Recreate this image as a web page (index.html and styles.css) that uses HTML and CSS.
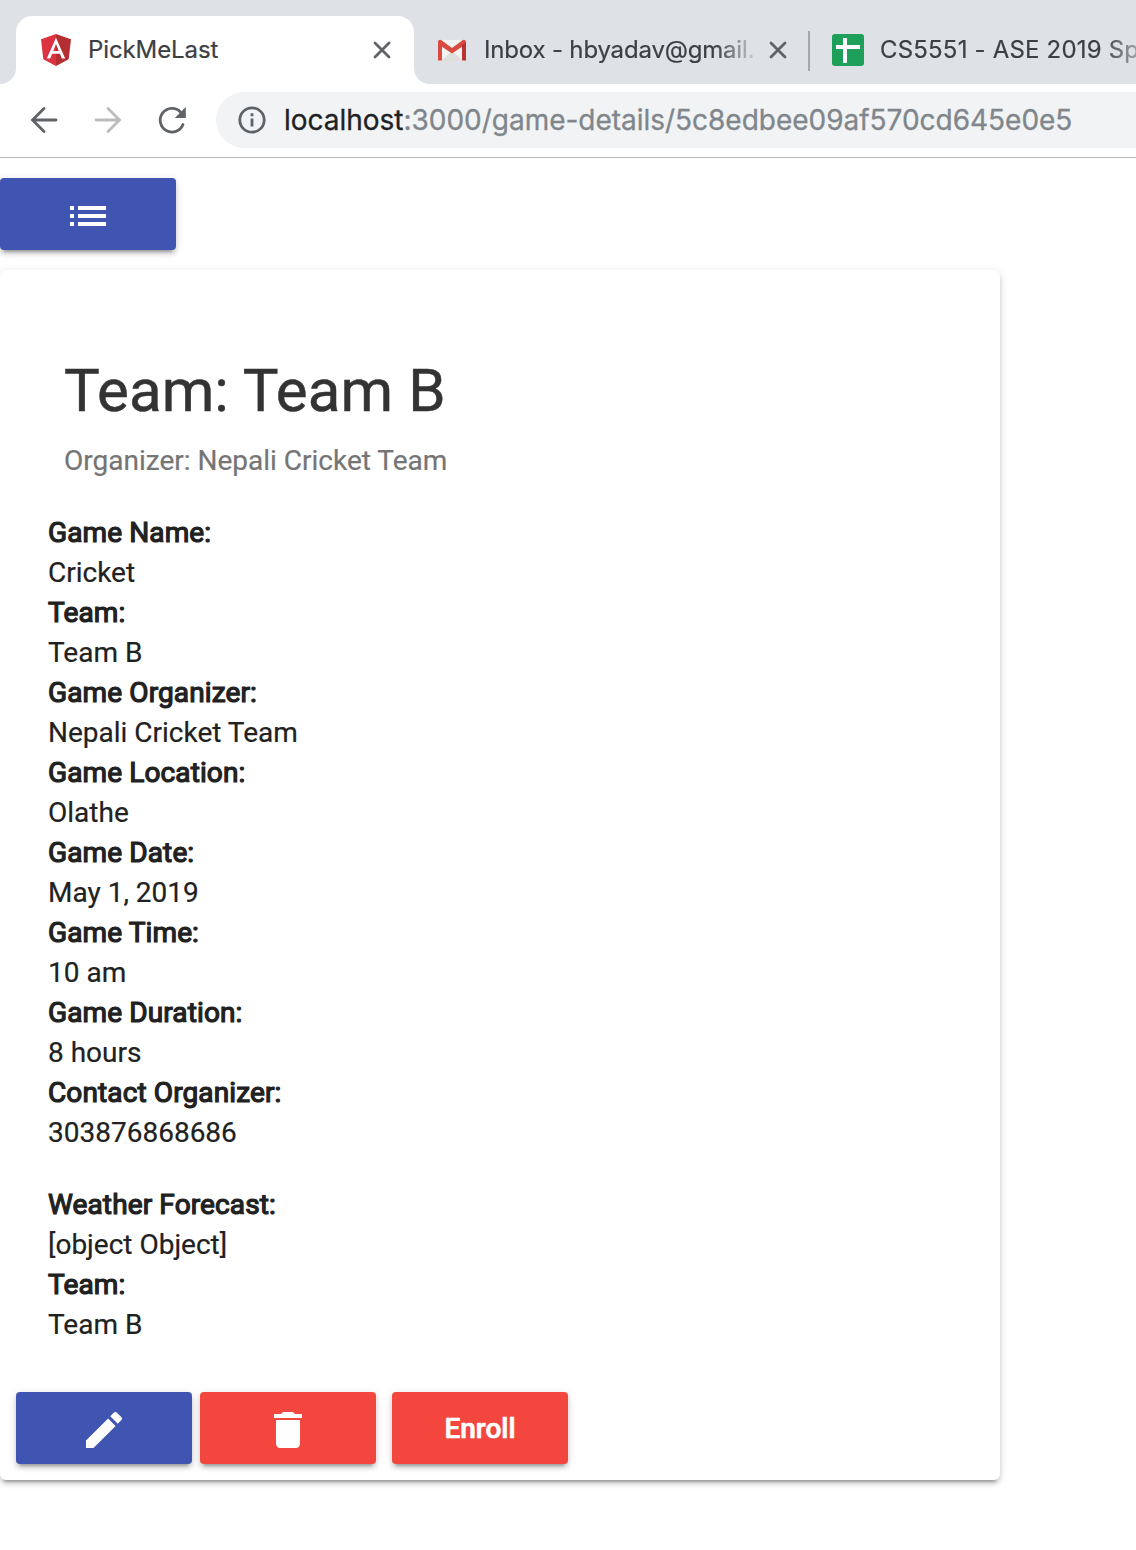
FILE: index.html
```html
<!DOCTYPE html>
<html lang="en">
<head>
<meta charset="utf-8">
<title>PickMeLast</title>
<link rel="stylesheet" href="styles.css">
</head>
<body>
<header class="browser">
  <div class="tabs">
    <div class="tab tab-active">
      <svg class="favicon" viewBox="0 0 32 32"><path fill="#dd3340" d="M16 0 1 5.3l2.3 20L16 32z"/><path fill="#b52e31" d="M16 0l15 5.3-2.3 20L16 32z"/><path fill="#fff" fill-rule="evenodd" d="M16 3.7 6.8 24.500h3.400l1.850-4.700h7.900l1.850 4.700h3.400zM16 10.100l2.750 6.900h-5.500z"/></svg>
      <span class="tab-title title-app">PickMeLast</span>
      <svg class="close" viewBox="0 0 20 20"><path d="M3 3 17 17M17 3 3 17"/></svg>
    </div>
    <div class="tab tab-mail">
      <svg class="favicon" viewBox="0 0 32 32"><path fill="#f2f2f2" d="M4 6h24v21H4z"/><path fill="#dedede" d="m5 27 11-10 11 10z"/><path fill="#d0d0d0" d="M6 12l10 7 10-7v-1l-10 6-10-6z"/><path fill="#d94a40" d="M2 8c0-2 2-3 3.500-1.800L16 14l10.500-7.800C28 5 30 6 30 8v2L16 19.500 2 10z"/><path fill="#d94a40" d="M2 8v18.500h4V11z"/><path fill="#b93430" d="M30 8v18.500h-4V11z"/></svg>
      <span class="tab-title title-mail">Inbox - hbyadav@gmail.</span>
      <svg class="close" viewBox="0 0 20 20"><path d="M3 3 17 17M17 3 3 17"/></svg>
    </div>
    <div class="tab tab-sheet">
      <svg class="favicon" viewBox="0 0 32 32"><rect width="32" height="32" rx="3" fill="#1fa05a"/><path fill="#fff" d="M11 4h4v7h13v4H15v14h-4V15H4v-4h7z"/></svg>
      <span class="tab-title title-sheet">CS5551 - ASE 2019 Sp</span>
    </div>
  </div>
  <div class="toolbar">
    <svg class="nav" viewBox="0 0 32 32"><path d="M28 16H5M16 4.500 4.500 16 16 27.500"/></svg>
    <svg class="nav nav-off" viewBox="0 0 32 32"><path d="M4 16h23M16 4.500 27.500 16 16 27.500"/></svg>
    <svg class="nav" viewBox="0 0 32 32"><path d="M27 20.500A11.800 11.800 0 1 1 24.500 8"/><path class="nav-head" d="M29.800 3v11H18.800z"/></svg>
    <div class="address">
      <svg class="info" viewBox="0 0 28 28"><circle cx="14" cy="14" r="12.200"/><path d="M14 12.500v8M14 7.200v3"/></svg>
      <span class="url"><span class="host">localhost</span>:3000/game-details/5c8edbee09af570cd645e0e5</span>
    </div>
  </div>
</header>
<main class="page">
  <button class="btn btn-primary" aria-label="All games"><svg class="icon" viewBox="0 0 24 24"><path d="M3 13h2v-2H3v2zm0 4h2v-2H3v2zm0-8h2V7H3v2zm4 4h14v-2H7v2zm0 4h14v-2H7v2zM7 7v2h14V7H7z"/></svg></button>
  <article class="card">
    <h2 class="title">Team: Team B</h2>
    <p class="subtitle">Organizer: Nepali Cricket Team</p>
    <dl class="details">
      <dt>Game Name:</dt><dd>Cricket</dd>
      <dt>Team:</dt><dd>Team B</dd>
      <dt>Game Organizer:</dt><dd>Nepali Cricket Team</dd>
      <dt>Game Location:</dt><dd>Olathe</dd>
      <dt>Game Date:</dt><dd>May 1, 2019</dd>
      <dt>Game Time:</dt><dd>10 am</dd>
      <dt>Game Duration:</dt><dd>8 hours</dd>
      <dt>Contact Organizer:</dt><dd>303876868686</dd>
    </dl>
    <dl class="details">
      <dt>Weather Forecast:</dt><dd>[object Object]</dd>
      <dt>Team:</dt><dd>Team B</dd>
    </dl>
    <div class="actions">
      <button class="btn btn-primary" aria-label="Edit"><svg class="icon" viewBox="0 0 24 24"><path d="M3 17.250V21h3.750L17.810 9.940l-3.750-3.750L3 17.250zM20.710 7.040c.39-.39.39-1.020 0-1.410l-2.340-2.340c-.39-.39-1.020-.39-1.410 0l-1.830 1.830 3.750 3.750 1.830-1.830z"/></svg></button>
      <button class="btn btn-warn" aria-label="Delete"><svg class="icon" viewBox="0 0 24 24"><path d="M6 19c0 1.100.9 2 2 2h8c1.100 0 2-.9 2-2V7H6v12zM19 4h-3.500l-1-1h-5l-1 1H5v2h14V4z"/></svg></button>
      <button class="btn btn-warn btn-enroll">Enroll</button>
    </div>
  </article>
</main>
</body>
</html>
```
FILE: styles.css
```css
* { box-sizing: border-box; }
body { margin: 0; min-height: 1550px; background: #fff; font-family: Roboto, sans-serif; color: #212121; }
svg { display: block; flex: none; }

.browser { font-family: Inter, "Liberation Sans", sans-serif; border-bottom: 1px solid #b3b4b6; }
.tabs { display: flex; height: 84px; padding: 16px 0 0 16px; background: #dee1e6; overflow: hidden; }
.tab { position: relative; display: flex; align-items: center; height: 68px; flex: none; }
.tab-active { width: 398px; padding: 0 22px 0 24px; background: #fff; border-radius: 16px 16px 0 0; }
.tab-active::before, .tab-active::after { content: ""; position: absolute; bottom: 0; width: 16px; height: 16px; }
.tab-active::before { left: -16px; background: radial-gradient(circle at 0 0, transparent 15.5px, #fff 16.500px); }
.tab-active::after { right: -16px; background: radial-gradient(circle at 100% 0, transparent 15.5px, #fff 16.500px); }
.tab-mail { width: 396px; padding: 0 22px; }
.tab-mail::after { content: ""; position: absolute; right: 0; top: 15px; width: 2px; height: 40px; background: #a4a7ab; }
.tab-sheet { padding-left: 22px; }
.favicon { width: 32px; height: 32px; margin-right: 16px; }
.tab-title { font-size: 24px; line-height: 32px; color: #3c4043; white-space: nowrap; flex: none; -webkit-text-stroke: 0.2px currentColor; }
.title-app { letter-spacing: -0.1px; }
.title-mail { width: 270px; letter-spacing: -0.18px; mask-image: linear-gradient(to right, #000 232px, transparent 276px); }
.title-sheet { width: 256px; letter-spacing: 0.19px; mask-image: linear-gradient(to right, #000 222px, transparent 280px); }
.close { width: 20px; height: 20px; margin-left: auto; fill: none; stroke: #5f6368; stroke-width: 2.8; stroke-linecap: round; }
.tab-mail .close { margin-left: 14px; }

.toolbar { display: flex; align-items: center; gap: 32px; height: 73px; padding: 8px 0 9px 28px; }
.nav { width: 32px; height: 32px; fill: none; stroke: #5f6368; stroke-width: 2.8; stroke-linecap: round; }
.nav-off { stroke: #babcbe; }
.nav-head { fill: #5f6368; stroke: none; }
.address { display: flex; align-items: center; flex: 1; height: 56px; margin-left: -4px; padding-left: 22px; background: #f1f3f4; border-radius: 28px 0 0 28px; }
.info { width: 28px; height: 28px; margin-right: 18px; fill: none; stroke: #5f6368; stroke-width: 2.8; }
.url { font-size: 28px; line-height: 40px; letter-spacing: -0.02px; color: #80868b; white-space: nowrap; -webkit-text-stroke: 0.3px currentColor; }
.host { color: #202124; }

.page { padding-top: 20px; }
.btn { display: flex; align-items: center; justify-content: center; width: 176px; height: 72px; padding: 0; border: 0; border-radius: 4px; color: #fff; font: 500 28px/72px Roboto, sans-serif; box-shadow: 0 6px 2px -4px rgba(0,0,0,.2), 0 4px 4px rgba(0,0,0,.14), 0 2px 10px rgba(0,0,0,.12); }
.btn-primary { background: #3f55b1; }
.btn-warn { background: #f2463f; }
.icon { width: 48px; height: 48px; margin-top: 4px; fill: currentColor; }
.card { width: 1000px; height: 1210px; margin-top: 20px; padding: 91px 16px 16px; border-radius: 6px; background: #fff; box-shadow: 0 6px 2px -4px rgba(0,0,0,.2), 0 4px 4px rgba(0,0,0,.14), 0 2px 10px rgba(0,0,0,.12); }
.title { margin: 0 48px 20px; font-size: 60px; line-height: 60px; font-weight: 400; letter-spacing: 0.1px; color: #333; -webkit-text-stroke: 0.5px currentColor; }
.subtitle { margin: 0 48px 32px; font-size: 28px; line-height: 40px; color: #757575; -webkit-text-stroke: 0.2px currentColor; }
.details { margin: 0 32px 32px; font-size: 28px; line-height: 40px; -webkit-text-stroke: 0.2px currentColor; }
.details dt { letter-spacing: 0.12px; -webkit-text-stroke: 1.2px currentColor; }
.details dd { margin: 0; }
.actions { display: flex; gap: 8px; padding-top: 15px; }
.btn-enroll { margin-left: 8px; padding-top: 2px; -webkit-text-stroke: 0.7px currentColor; }
```
